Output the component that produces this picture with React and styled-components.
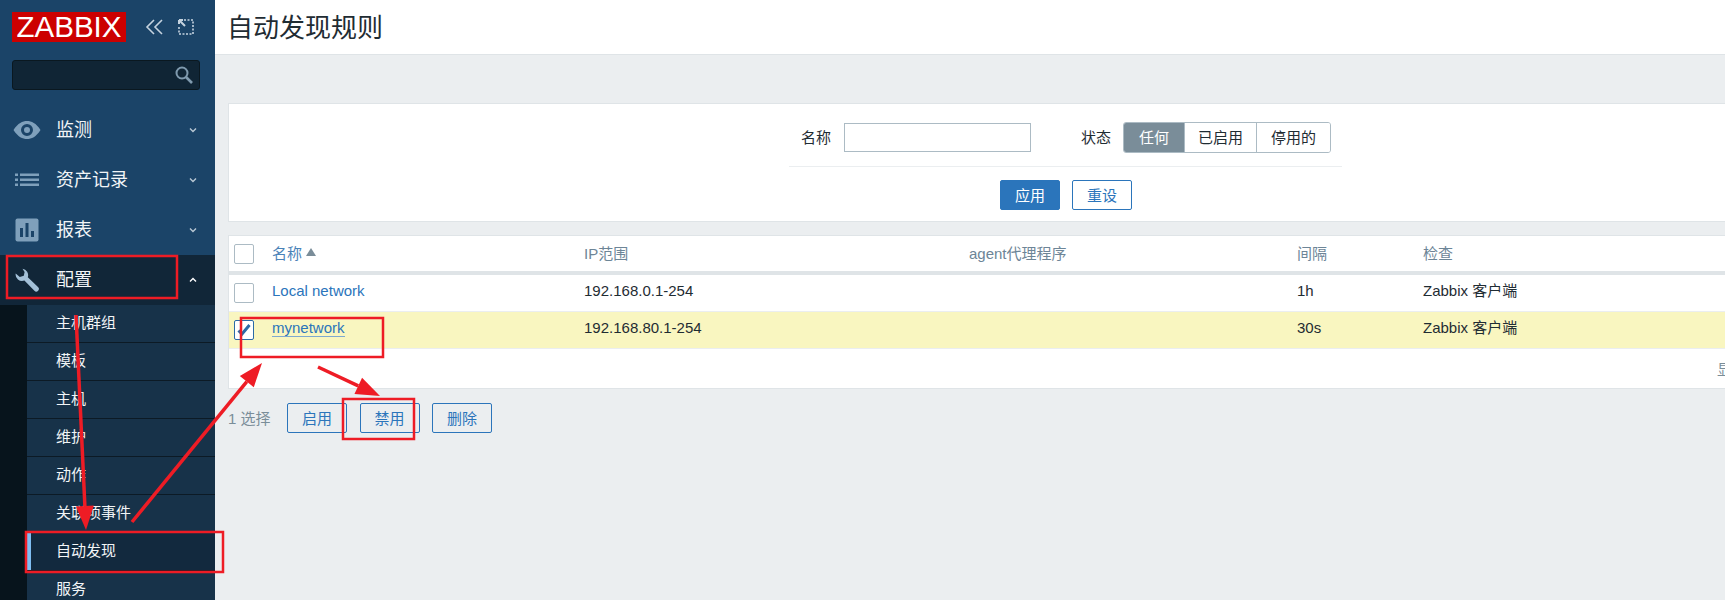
import React from "react";
import styled, { createGlobalStyle } from "styled-components";

const Global = createGlobalStyle`
  html, body { margin: 0; padding: 0; height: 600px; overflow: hidden; background: #ebeef0; }
  body { font-family: "Liberation Sans", Arial, "Noto Sans CJK SC", sans-serif; font-size: 15px; color: #1f2c33; }
  #root { height: 600px; }
`;
const Page = styled.div`position: relative; display: flex; width: 1725px; height: 600px; overflow: hidden;`;
const Side = styled.aside`width: 215px; flex: none; background: #1b4468; display: flex; flex-direction: column; height: 600px; overflow: hidden; & > * { flex-shrink: 0; }`;
const Brand = styled.div`display: flex; align-items: center; height: 30px; padding: 12px 0 0 12px;`;
const Logo = styled.div`flex: none; width: 114px; height: 30px; background: #cc0000; color: #fff; font: 29.5px/30px "Liberation Sans", Arial, sans-serif; text-align: center;`;
const BrandIcon = styled.svg`width: 20px; height: 20px; margin-left: ${p => p.$ml}px; fill: none; stroke: #c5d3df; stroke-width: 1.6;`;
const Search = styled.div`margin: 18px 15px 0 12px; height: 30px; box-sizing: border-box; background: #102535; border: 1px solid #0a1820; border-radius: 3px; display: flex; align-items: center; justify-content: flex-end; padding-right: 5px;`;
const Nav = styled.nav`margin-top: 15px; display: flex; flex-direction: column;`;
const NavRow = styled.div`height: 50px; display: flex; align-items: center; padding: 0 17px 0 12px; color: #f2f5f7; font-size: 18px; background: ${p => (p.$open ? "#112638" : "transparent")};`;
const NavIcon = styled.span`width: 30px; height: 30px; display: flex; align-items: center; justify-content: center; margin-right: 14px;`;
const NavLabel = styled.span`flex: 1; padding-bottom: 4px;`;
const SubWrap = styled.div`display: flex; flex: 1;`;
const Strip = styled.div`width: 27px; background: #07141c;`;
const SubList = styled.div`flex: 1; background: #173249; display: flex; flex-direction: column;`;
const SubItem = styled.div`height: 38px; flex: none; box-sizing: border-box; display: flex; align-items: center; padding: 0 0 4px 29px; color: #f2f5f7; font-size: 15px; border-bottom: 1px solid #0c1a25; background: ${p => (p.$active ? "#12293e" : "transparent")}; box-shadow: ${p => (p.$active ? "inset 4px 0 0 #7fbdf2" : "none")};`;
const Main = styled.main`flex: 1; min-width: 0; display: flex; flex-direction: column;`;
const Header = styled.header`height: 55px; flex: none; background: #fff; border-bottom: 1px solid #dfe4e7; display: flex; align-items: center; padding: 0 0 4px 12px; box-sizing: border-box; font-size: 26px; color: #1f2c33;`;
const Body = styled.div`padding: 48px 0 0 13px;`;
const FilterPanel = styled.section`background: #fff; border: 1px solid #dfe4e7; border-right: 0; height: 119px; box-sizing: border-box; display: flex; flex-direction: column; align-items: flex-start;`;
const FilterRow = styled.div`display: flex; align-items: center; margin-left: 560px; height: 63px; width: 553px; padding-top: 4px; border-bottom: 1px solid #ebeef0; box-sizing: border-box;`;
const FieldLabel = styled.label`font-size: 15px; margin: ${p => p.$m}; padding-bottom: 1px;`;
const Input = styled.div`width: 187px; height: 29px; box-sizing: border-box; border: 1px solid #acbbc4; background: #fff; margin-left: 13px;`;
const Seg = styled.div`display: flex; height: 31px; margin-left: 12px; border: 1px solid #acbbc4; border-radius: 3px; overflow: hidden; box-sizing: border-box;`;
const SegItem = styled.div`display: flex; align-items: center; justify-content: center; box-sizing: border-box; padding-bottom: 1px; width: ${p => p.$w}px; color: ${p => (p.$on ? "#fff" : "#1f2c33")}; background: ${p => (p.$on ? "#7a8d99" : "#fff")}; border-left: ${p => (p.$first ? "0" : "1px solid #acbbc4")};`;
const Actions = styled.div`display: flex; gap: 12px; margin: 13px 0 0 771px;`;
const Button = styled.button`width: 60px; height: 30px; box-sizing: border-box; font: 15px "Liberation Sans", Arial, "Noto Sans CJK SC", sans-serif; padding: 0 0 2px; border-radius: 2px; border: 1px solid #2b75bb; background: ${p => (p.$primary ? "#2b75bb" : "transparent")}; color: ${p => (p.$primary ? "#fff" : "#2b75bb")};`;
const TablePanel = styled.section`margin-top: 13px; background: #fff; border: 1px solid #dfe4e7; border-right: 0; height: 154px; box-sizing: border-box;`;
const Row = styled.div`display: grid; grid-template-columns: 43px 312px 385px 328px 126px 1fr; height: ${p => p.$h}px; box-sizing: border-box; align-items: center; background: ${p => (p.$sel ? "#f9f6c0" : "#fff")}; border-bottom: ${p => p.$b} solid ${p => p.$bc || "#ebeef0"};`;
const Head = styled.div`color: #6d8597; padding-bottom: 3px;`;
const NameHead = styled(Head)`color: #4a82b8; display: flex; align-items: center; gap: 4px;`;
const Sort = styled.span`width: 0; height: 0; border-left: 5px solid transparent; border-right: 5px solid transparent; border-bottom: 8px solid #7a8d99;`;
const Cell = styled.div`line-height: 18px; padding-bottom: 4px;`;
const Link = styled.span`color: #2b75bb; ${p => p.$u && "border-bottom: 1px solid #7fa9cf;"}`;
const Box = styled.span`display: block; width: 20px; height: 20px; box-sizing: border-box; margin-left: 5px; border-radius: 2px; background: #fff; border: 1px solid ${p => (p.$on ? "#2b6aa6" : "#acbbc4")}; position: relative;`;
const Pager = styled.div`height: 40px; display: flex; align-items: center; justify-content: flex-end; padding-bottom: 2px; box-sizing: border-box; color: #7a8d99; overflow: hidden;`;
const PagerText = styled.span`margin-right: -7px; white-space: nowrap;`;
const BulkBar = styled.div`display: flex; align-items: center; margin-top: 14px; height: 30px;`;
const Count = styled.span`color: #7a8d99; width: 59px; padding-bottom: 2px;`;
const BulkGroup = styled.div`display: flex; gap: 12.5px;`;
const Overlay = styled.svg`position: absolute; left: 0; top: 0; width: 1725px; height: 600px; pointer-events: none;`;

const Chev = ({ up }) => (
  <svg width="10" height="10" viewBox="0 0 10 10" fill="none" stroke={up ? "#fff" : "#b9c8d4"} strokeWidth="1.4">
    <path d={up ? "M2 6.5 L5 3.5 L8 6.5" : "M2 3.5 L5 6.5 L8 3.5"} />
  </svg>
);
const Eye = () => (
  <svg width="28" height="20" viewBox="0 0 28 20">
    <path fill="#7fa0bb" fillRule="evenodd" d="M0.5 10 C5 3 9.5 1 14 1 C18.5 1 23 3 27.5 10 C23 17 18.5 19 14 19 C9.5 19 5 17 0.5 10 Z M14 4 A6 6 0 1 0 14 16 A6 6 0 1 0 14 4 Z M14 7 A3 3 0 1 1 14 13 A3 3 0 1 1 14 7 Z" />
  </svg>
);
const List = () => (
  <svg width="24" height="14" viewBox="0 0 24 14" fill="#7fa0bb">
    <rect x="0" y="0.5" width="3" height="2.5" /><rect x="5" y="0.5" width="19" height="2.5" />
    <rect x="0" y="5.5" width="3" height="2.5" /><rect x="5" y="5.5" width="19" height="2.5" />
    <rect x="0" y="10.5" width="3" height="2.5" /><rect x="5" y="10.5" width="19" height="2.5" />
  </svg>
);
const Chart = () => (
  <svg width="24" height="24" viewBox="0 0 24 24">
    <rect width="23" height="23" x="0.5" y="0.5" rx="2" fill="#7fa0bb" />
    <rect x="5" y="10" width="3" height="9" fill="#1b4468" /><rect x="10.5" y="5" width="3" height="14" fill="#1b4468" /><rect x="16" y="13" width="3" height="6" fill="#1b4468" />
  </svg>
);
const Wrench = () => (
  <svg width="24" height="24" viewBox="0 0 24 24">
    <path fill="#a3c0d8" d="M7.5 0.8 A6.5 6.5 0 0 1 12.8 9.3 L23 19 A2.4 2.4 0 0 1 19.4 22.8 L9.4 12.6 A6.5 6.5 0 0 1 0.7 5.4 L4.8 9 L8.8 7.8 L9.6 4 Z" />
  </svg>
);
const Check = () => (
  <svg width="18" height="18" viewBox="0 0 18 18" style={{ position: "absolute", left: 0, top: 0 }}>
    <path d="M3.5 9.5 L7 13 L14.5 4" fill="none" stroke="#2b6aa6" strokeWidth="3" />
  </svg>
);

const Arrow = ({ x1, y1, x2, y2 }) => {
  const dx = x2 - x1, dy = y2 - y1, l = Math.hypot(dx, dy), ux = dx / l, uy = dy / l;
  const bx = x2 - ux * 24, by = y2 - uy * 24;
  return (
    <g>
      <line x1={x1} y1={y1} x2={bx} y2={by} stroke="#ee1c25" strokeWidth="3.5" />
      <polygon fill="#ee1c25" points={`${x2},${y2} ${bx - uy * 9},${by + ux * 9} ${bx + uy * 9},${by - ux * 9}`} />
    </g>
  );
};

const subs = ["主机群组", "模板", "主机", "维护", "动作", "关联项事件", "自动发现", "服务"];

export default function App() {
  return (
    <Page>
      <Global />
      <Side>
        <Brand>
          <Logo>ZABBIX</Logo>
          <BrandIcon $ml={19} viewBox="0 0 20 20"><path d="M9 3 L2 10 L9 17 M17 3 L10 10 L17 17" /></BrandIcon>
          <BrandIcon $ml={11} viewBox="0 0 20 20"><path strokeDasharray="2 1.5" d="M8 3 H17 V17 H3 V9" /><path d="M3 3 L9 9 M3 3 H7 M3 3 V7" strokeWidth="2" /></BrandIcon>
        </Brand>
        <Search>
          <svg width="20" height="20" viewBox="0 0 20 20" fill="none" stroke="#7f9aae" strokeWidth="2"><circle cx="8" cy="8" r="5.5" /><path d="M12 12 L18 18" strokeWidth="2.6" /></svg>
        </Search>
        <Nav>
          <NavRow><NavIcon><Eye /></NavIcon><NavLabel>监测</NavLabel><Chev /></NavRow>
          <NavRow><NavIcon><List /></NavIcon><NavLabel>资产记录</NavLabel><Chev /></NavRow>
          <NavRow><NavIcon><Chart /></NavIcon><NavLabel>报表</NavLabel><Chev /></NavRow>
          <NavRow $open><NavIcon><Wrench /></NavIcon><NavLabel>配置</NavLabel><Chev up /></NavRow>
        </Nav>
        <SubWrap>
          <Strip />
          <SubList>
            {subs.map(s => <SubItem key={s} $active={s === "自动发现"}>{s}</SubItem>)}
          </SubList>
        </SubWrap>
      </Side>
      <Main>
        <Header>自动发现规则</Header>
        <Body>
          <FilterPanel>
            <FilterRow>
              <FieldLabel $m="0 0 0 12px">名称</FieldLabel>
              <Input />
              <FieldLabel $m="0 0 0 50px">状态</FieldLabel>
              <Seg>
                <SegItem $on $first $w={60}>任何</SegItem>
                <SegItem $w={72}>已启用</SegItem>
                <SegItem $w={74}>停用的</SegItem>
              </Seg>
            </FilterRow>
            <Actions>
              <Button $primary>应用</Button>
              <Button>重设</Button>
            </Actions>
          </FilterPanel>
          <TablePanel>
            <Row $h={39} $b="4px" $bc="#dfe4e7">
              <Box />
              <NameHead>名称<Sort /></NameHead>
              <Head>IP范围</Head><Head>agent代理程序</Head><Head>间隔</Head><Head>检查</Head>
            </Row>
            <Row $h={37} $b="1px">
              <Box /><Cell><Link>Local network</Link></Cell><Cell>192.168.0.1-254</Cell><Cell /><Cell>1h</Cell><Cell>Zabbix 客户端</Cell>
            </Row>
            <Row $h={37} $b="1px" $sel>
              <Box $on><Check /></Box><Cell><Link $u>mynetwork</Link></Cell><Cell>192.168.80.1-254</Cell><Cell /><Cell>30s</Cell><Cell>Zabbix 客户端</Cell>
            </Row>
            <Pager><PagerText>显</PagerText></Pager>
          </TablePanel>
          <BulkBar>
            <Count>1 选择</Count>
            <BulkGroup>
              <Button>启用</Button>
              <Button>禁用</Button>
              <Button>删除</Button>
            </BulkGroup>
          </BulkBar>
        </Body>
      </Main>
      <Overlay viewBox="0 0 1725 600">
        <g fill="none" stroke="#ee1c25" strokeWidth="2.5">
          <rect x="7" y="256" width="170" height="42" />
          <rect x="26" y="532" width="197" height="40" />
          <rect x="241" y="318" width="142" height="39" />
          <rect x="343" y="399" width="71" height="40" />
        </g>
        <Arrow x1={76} y1={315} x2={86} y2={530} />
        <Arrow x1={132} y1={522} x2={262} y2={363} />
        <Arrow x1={318} y1={367} x2={380} y2={396} />
      </Overlay>
    </Page>
  );
}
